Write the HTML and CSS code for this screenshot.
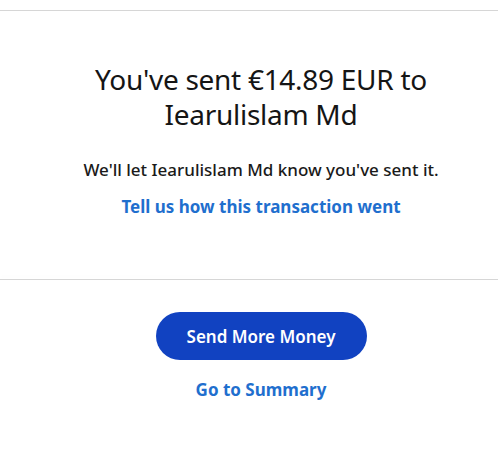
FILE: index.html
```html
<!DOCTYPE html>
<html>
<head>
<meta charset="utf-8">
<link rel="stylesheet" href="styles.css">
</head>
<body>
<div class="page">
  <div class="top-rule"></div>
  <section class="message">
    <h1 class="title">You've sent €14.89 EUR to Iearulislam Md</h1>
    <p class="note">We'll let Iearulislam Md know you've sent it.</p>
    <a class="link feedback" href="#">Tell us how this transaction went</a>
  </section>
  <div class="divider"></div>
  <section class="actions">
    <button class="primary">Send More Money</button>
    <a class="link summary" href="#">Go to Summary</a>
  </section>
</div>
</body>
</html>
```
FILE: styles.css
```css
html, body {
  margin: 0;
  padding: 0;
  background: #ffffff;
}
body {
  font-family: "Noto Sans", "Open Sans", sans-serif;
  color: #1a1a1a;
}
.page {
  width: 498px;
  padding-top: 10px;
}
.top-rule {
  height: 1px;
  background: #d6d6d6;
}
.message {
  display: flex;
  flex-direction: column;
  align-items: center;
  padding: 51px 0 60px 24px;
}
.title {
  margin: 0;
  width: 360px;
  text-align: center;
  font-size: 28px;
  font-weight: 400;
  line-height: 35px;
  letter-spacing: -0.28px;
  color: #151515;
}
.note {
  margin: 26px 0 0;
  font-size: 17px;
  font-weight: 500;
  line-height: 24px;
  color: #1a1a1a;
}
.link {
  color: #1f6fce;
  font-weight: 700;
  text-decoration: none;
  font-size: 17px;
  line-height: 24px;
}
.feedback {
  margin-top: 13px;
}
.divider {
  height: 1px;
  background: #d6d6d6;
  box-shadow: 0 -3px 3px rgba(0,0,0,0.02);
}
.actions {
  display: flex;
  flex-direction: column;
  align-items: center;
  padding: 32px 0 0 24px;
}
.primary {
  width: 211px;
  height: 48px;
  border: 0;
  border-radius: 24px;
  background: #1142c1;
  color: #ffffff;
  font-family: inherit;
  font-size: 17px;
  font-weight: 600;
}
.summary {
  margin-top: 18px;
}
```
